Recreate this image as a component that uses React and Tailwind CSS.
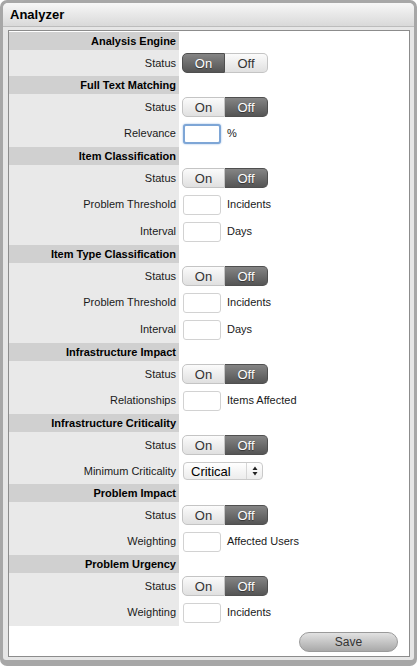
import React from "react";

const font = { fontFamily: '"Liberation Sans", Arial, Helvetica, sans-serif' };

function Header({ title }) {
  return (
    <div className="flex h-[18px]">
      <div className="w-[170px] shrink-0 bg-[#d0d0d0] flex items-center justify-end pr-[3px] text-[11px] font-bold text-black leading-none">
        {title}
      </div>
      <div className="flex-1" />
    </div>
  );
}

function Row({ label, h, children }) {
  return (
    <div className={"flex " + h}>
      <div className="w-[170px] shrink-0 bg-[#e9e9e9] flex items-center justify-end pr-[3px] text-[11px] text-[#1a1a1a] leading-none">
        {label}
      </div>
      <div className="flex-1 flex items-center pl-[3px]">{children}</div>
    </div>
  );
}

function Toggle({ on }) {
  const active =
    "bg-gradient-to-b from-[#858585] to-[#555555] text-white border-[#4f4f4f] [text-shadow:0_1px_1px_rgba(0,0,0,0.5)]";
  const inactive =
    "bg-gradient-to-b from-[#fbfbfb] to-[#e0e0e0] text-[#333] border-[#c4c4c4]";
  return (
    <div className="flex h-[20px] w-[86px] text-[13px] leading-none">
      <div
        className={
          "w-[43px] flex items-center justify-center border rounded-l-[5px] " +
          (on ? active : inactive)
        }
      >
        On
      </div>
      <div
        className={
          "w-[43px] flex items-center justify-center border border-l-0 rounded-r-[5px] " +
          (!on ? active : inactive)
        }
      >
        Off
      </div>
    </div>
  );
}

function StatusRow({ on }) {
  return (
    <Row label="Status" h="h-[26px]">
      <Toggle on={on} />
    </Row>
  );
}

function InputRow({ label, suffix, focus }) {
  return (
    <Row label={label} h="h-[27px]">
      <div className="flex items-center">
        <div
          className={
            "w-[38px] h-[20px] bg-white rounded-[3px] ml-[1px] " +
            (focus
              ? "border-2 border-[#7ea6d6] shadow-[0_0_2px_#8fb4e0]"
              : "border border-[#d2d2d2]")
          }
        />
        <span className="ml-[6px] text-[11px] text-[#1a1a1a] leading-none">{suffix}</span>
      </div>
    </Row>
  );
}

export default function App() {
  return (
    <div style={font} className="w-[417px] h-[666px] bg-white">
      <div className="h-[666px] bg-[#a7a7a7] rounded-[7px] pt-[3px] px-[3px] pb-[6px]">
        <div className="h-full bg-[#e6e6e6] rounded-t-[5px] rounded-b-[3px] flex flex-col">
          <div className="h-[24px] shrink-0 rounded-t-[5px] bg-gradient-to-b from-[#f7f7f7] to-[#d9d9d9] border-b border-[#bcbcbc] flex items-center pl-[7px] text-[13px] font-bold text-black">
            Analyzer
          </div>
          <div className="flex-1 pt-[3px] pl-[5px] pr-[4px] pb-[3px] flex">
            <div className="flex-1 bg-white border border-[#8c8c8c] pt-[1px] flex flex-col">
              <Header title="Analysis Engine" />
              <StatusRow on />
              <Header title="Full Text Matching" />
              <StatusRow on={false} />
              <InputRow label="Relevance" suffix="%" focus />
              <Header title="Item Classification" />
              <StatusRow on={false} />
              <InputRow label="Problem Threshold" suffix="Incidents" />
              <InputRow label="Interval" suffix="Days" />
              <Header title="Item Type Classification" />
              <StatusRow on={false} />
              <InputRow label="Problem Threshold" suffix="Incidents" />
              <InputRow label="Interval" suffix="Days" />
              <Header title="Infrastructure Impact" />
              <StatusRow on={false} />
              <InputRow label="Relationships" suffix="Items Affected" />
              <Header title="Infrastructure Criticality" />
              <StatusRow on={false} />
              <Row label="Minimum Criticality" h="h-[26px]">
                <div className="ml-[1px] w-[80px] h-[18px] rounded-[4px] border border-[#cacaca] bg-gradient-to-b from-white to-[#ececec] flex items-center text-[13px] text-black leading-none">
                  <span className="flex-1 pl-[7px]">Critical</span>
                  <span className="w-[16px] h-full border-l border-[#d6d6d6] flex items-center justify-center">
                    <svg width="6" height="10" viewBox="0 0 6 10">
                      <path d="M3 0.5 L5.5 4 L0.5 4 Z" fill="#222" />
                      <path d="M3 9.5 L5.5 6 L0.5 6 Z" fill="#222" />
                    </svg>
                  </span>
                </div>
              </Row>
              <Header title="Problem Impact" />
              <StatusRow on={false} />
              <InputRow label="Weighting" suffix="Affected Users" />
              <Header title="Problem Urgency" />
              <StatusRow on={false} />
              <InputRow label="Weighting" suffix="Incidents" />
              <div className="flex justify-end pt-[6px] pr-[11px]">
                <button className="w-[99px] h-[20px] rounded-full border border-[#9a9a9a] bg-gradient-to-b from-[#e2e2e2] to-[#a9a9a9] text-[12px] text-[#333] leading-none">
                  Save
                </button>
              </div>
            </div>
          </div>
        </div>
      </div>
    </div>
  );
}
